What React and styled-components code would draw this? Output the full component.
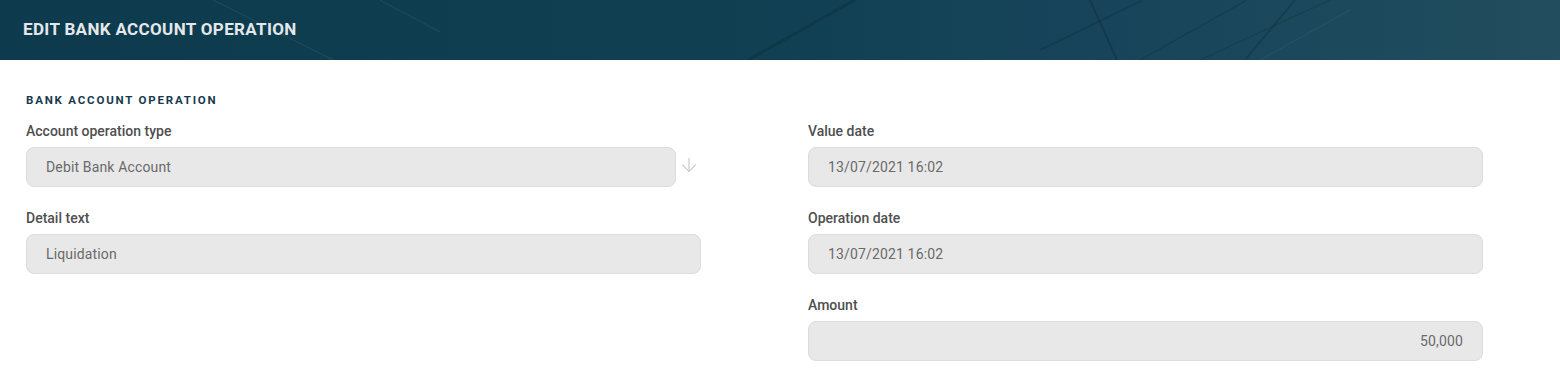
import React from "react";
import styled, { createGlobalStyle } from "styled-components";
import { ArrowDown } from "lucide-react";

const Global = createGlobalStyle`
  html, body {
    margin: 0;
    padding: 0;
    background: #ffffff;
    font-family: Roboto, "Liberation Sans", sans-serif;
  }
  * { box-sizing: border-box; }
`;

const Header = styled.header`
  position: relative;
  height: 60px;
  display: flex;
  align-items: center;
  padding: 0 23px 2px;
  overflow: hidden;
  background: linear-gradient(90deg, #0d3b4d 0%, #0f3f51 45%, #17445a 70%, #214d5e 100%);
`;

const Lines = styled.svg`
  position: absolute;
  inset: 0;
  width: 100%;
  height: 100%;
  pointer-events: none;
`;

const Title = styled.h1`
  position: relative;
  margin: 0;
  font-size: 17px;
  font-weight: 700;
  color: #e4e8ea;
  letter-spacing: 0.35px;
  text-transform: uppercase;
`;

const Body = styled.main`
  padding: 33px 26px 0;
`;

const SectionTitle = styled.h2`
  margin: 0 0 17px;
  font-size: 11.5px;
  line-height: 14px;
  font-weight: 700;
  letter-spacing: 1.8px;
  color: #173b4d;
  text-transform: uppercase;
`;

const Columns = styled.div`
  display: grid;
  grid-template-columns: 675px 675px;
  column-gap: 107px;
`;

const Column = styled.div`
  display: flex;
  flex-direction: column;
  gap: 24px;
`;

const Field = styled.div`
  display: flex;
  flex-direction: column;
  gap: 9px;
`;

const Label = styled.label`
  font-size: 14px;
  line-height: 14px;
  font-weight: 500;
  color: #4f4f4f;
`;

const InputRow = styled.div`
  display: flex;
  align-items: center;
  gap: 1px;
`;

const Input = styled.div`
  flex: 1 1 auto;
  height: 40px;
  display: flex;
  align-items: center;
  justify-content: ${({ $align }) => ($align === "right" ? "flex-end" : "flex-start")};
  padding: 0 19px;
  background: #e8e8e8;
  border: 1px solid #dcdcdc;
  border-radius: 8px;
  font-size: 14px;
  letter-spacing: 0.15px;
  color: #6a6a6a;
`;

const Adornment = styled.span`
  width: 24px;
  display: flex;
  justify-content: center;
  margin-bottom: 5px;
  color: #cdcdcd;
`;

const App = () => (
  <>
    <Global />
    <Header>
      <Lines viewBox="0 0 1560 60" preserveAspectRatio="none">
        <g fill="none" strokeWidth="1.5">
          <line x1="213" y1="0" x2="333" y2="60" stroke="rgba(255,255,255,0.06)" />
          <line x1="380" y1="0" x2="440" y2="32" stroke="rgba(255,255,255,0.05)" />
          <line x1="855" y1="0" x2="748" y2="60" stroke="rgba(0,0,0,0.12)" strokeWidth="3" />
          <line x1="1090" y1="0" x2="1117" y2="60" stroke="rgba(0,0,0,0.15)" strokeWidth="2" />
          <line x1="1040" y1="50" x2="1143" y2="0" stroke="rgba(0,0,0,0.12)" strokeWidth="2" />
          <line x1="1140" y1="60" x2="1247" y2="0" stroke="rgba(0,0,0,0.12)" />
          <line x1="1200" y1="60" x2="1330" y2="0" stroke="rgba(0,0,0,0.1)" />
          <line x1="1245" y1="60" x2="1295" y2="0" stroke="rgba(0,0,0,0.15)" strokeWidth="2" />
          <line x1="1260" y1="60" x2="1350" y2="10" stroke="rgba(255,255,255,0.04)" />
        </g>
      </Lines>
      <Title>Edit bank account operation</Title>
    </Header>
    <Body>
      <SectionTitle>Bank account operation</SectionTitle>
      <Columns>
        <Column>
          <Field>
            <Label>Account operation type</Label>
            <InputRow>
              <Input>Debit Bank Account</Input>
              <Adornment>
                <ArrowDown size={22} strokeWidth={1.4} />
              </Adornment>
            </InputRow>
          </Field>
          <Field>
            <Label>Detail text</Label>
            <Input>Liquidation</Input>
          </Field>
        </Column>
        <Column>
          <Field>
            <Label>Value date</Label>
            <Input>13/07/2021 16:02</Input>
          </Field>
          <Field>
            <Label>Operation date</Label>
            <Input>13/07/2021 16:02</Input>
          </Field>
          <Field>
            <Label>Amount</Label>
            <Input $align="right">50,000</Input>
          </Field>
        </Column>
      </Columns>
    </Body>
  </>
);

export default App;
